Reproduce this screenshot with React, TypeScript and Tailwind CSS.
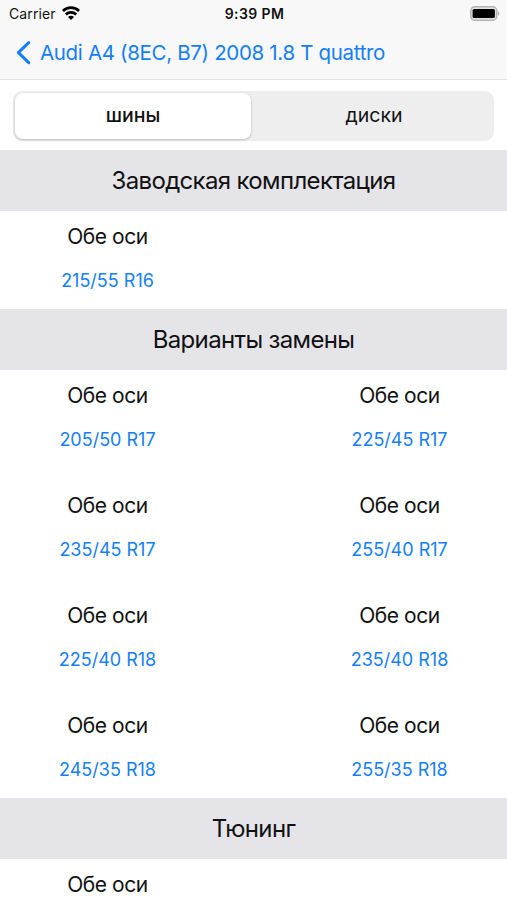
interface AxleSize { label: string; size: string; }

interface SizeSection { title: string; items: AxleSize[]; }

const axle = 'Обе оси';

const sections: SizeSection[] = [
  { title: 'Заводская комплектация', items: [{ label: axle, size: '215/55 R16' }] },
  {
    title: 'Варианты замены',
    items: [
      { label: axle, size: '205/50 R17' },
      { label: axle, size: '225/45 R17' },
      { label: axle, size: '235/45 R17' },
      { label: axle, size: '255/40 R17' },
      { label: axle, size: '225/40 R18' },
      { label: axle, size: '235/40 R18' },
      { label: axle, size: '245/35 R18' },
      { label: axle, size: '255/35 R18' },
    ],
  },
  { title: 'Тюнинг', items: [{ label: axle, size: '' }] },
];

function StatusBar() {
  return (
    <div className="grid h-[27px] grid-cols-3 items-center pl-[9px] pr-[7px] text-[#111]">
      <div className="flex items-center gap-[6px]">
        <span className="text-[14px] leading-none tracking-[0.1px]">Carrier</span>
        <svg className="mb-px" width="18" height="14" viewBox="0 0 18 14" fill="none" stroke="#000" strokeWidth="2.7">
          <path d="M.9 5C5.4.5 12.6.5 17.1 5" />
          <path d="M3.8 8.5c2.9-2.8 7.5-2.8 10.4 0" />
          <path d="M9 13.9 6 10.9a4.2 4.2 0 0 1 6 0Z" fill="#000" stroke="none" />
        </svg>
      </div>
      <span className="text-center text-[14px] font-semibold leading-none tracking-[0.4px]">9:39 PM</span>
      <svg className="mb-px justify-self-end" width="30" height="15" viewBox="0 0 30 15">
        <rect x=".8" y=".8" width="25.9" height="13.4" rx="3.8" fill="#e4e4e4" stroke="#b4b4b4" strokeWidth="1.5" />
        <rect x="2.6" y="2.9" width="22.3" height="9.2" rx="1.6" fill="#000" />
        <path d="M27.8 5.2c2.2.8 2.2 3.8 0 4.6Z" fill="#b4b4b4" />
      </svg>
    </div>
  );
}

function NavBar() {
  return (
    <div className="flex h-[52px] items-center gap-[9px] pl-[16px] text-[#147efb]">
      <svg width="15" height="24" viewBox="0 0 15 24" fill="none" stroke="currentColor" strokeWidth="3" strokeLinecap="round" strokeLinejoin="round">
        <path d="M12.7 1.6 2.4 11.6l10.3 10" />
      </svg>
      <span className="whitespace-nowrap text-[20.5px] leading-none tracking-[-0.33px]">Audi A4 (8EC, B7) 2008 1.8 T quattro</span>
    </div>
  );
}

function Tabs() {
  return (
    <div className="h-[70px] px-[13px] pt-[11px]">
      <div className="grid h-[50px] w-full grid-cols-[236px_1fr] rounded-[9px] bg-[#eeeeef] p-[2px] text-[19.5px] text-[#111]">
        <button className="rounded-[8px] bg-white font-medium shadow-[0_1px_3px_rgba(0,0,0,0.22)]">шины</button>
        <button className="pl-[5px]">диски</button>
      </div>
    </div>
  );
}

function Section({ title, items }: SizeSection) {
  return (
    <section>
      <h2 className="flex h-[61px] items-center justify-center bg-[#e5e4e9] text-[24px] tracking-[-0.65px] text-[#111]">{title}</h2>
      <div className="grid grid-cols-[215px_215px] justify-between gap-y-[12px]">
        {items.map((item, i) => (
          <div key={i} className="flex h-[98px] flex-col items-center pt-[13px]">
            <span className="text-[21px] leading-[25px] tracking-[-0.45px] text-[#111]">{item.label}</span>
            <span className="mt-[21px] text-[18px] leading-[22px] text-[#147efb]">{item.size}</span>
          </div>
        ))}
      </div>
    </section>
  );
}

export default function App() {
  return (
    <main className="h-[900px] w-[507px] overflow-hidden bg-white font-['Inter','Noto_Sans',sans-serif] text-black">
      <header className="border-b border-[#e2e2e4] bg-[#f8f8f8]">
        <StatusBar />
        <NavBar />
      </header>
      <Tabs />
      {sections.map((section) => (
        <Section key={section.title} {...section} />
      ))}
    </main>
  );
}
